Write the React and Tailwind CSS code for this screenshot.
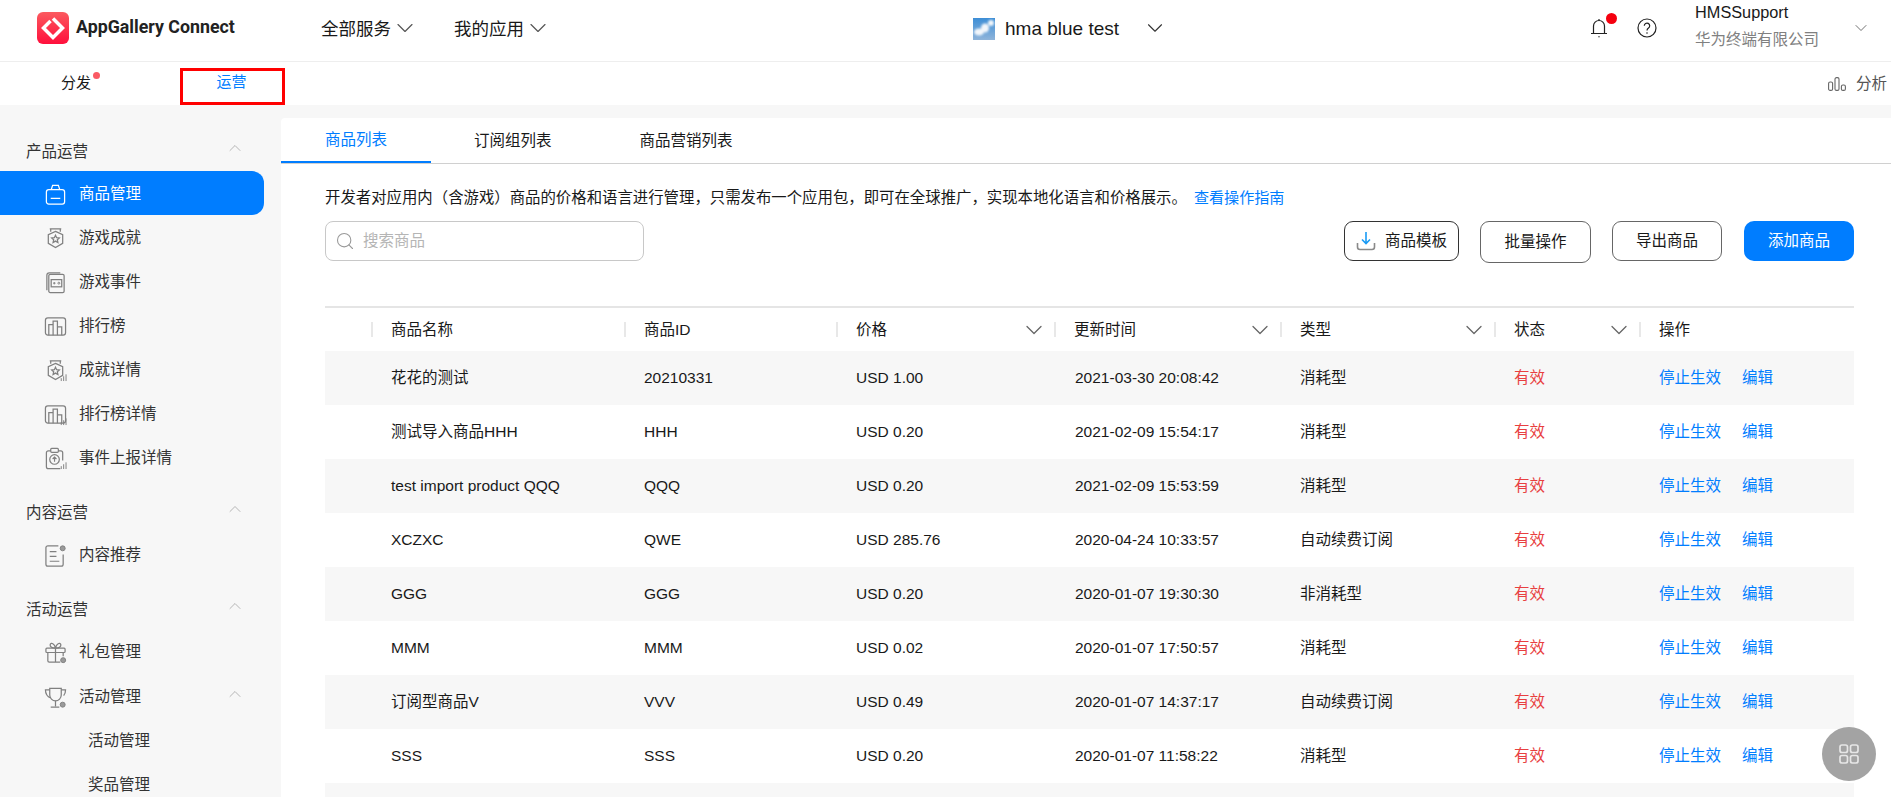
import React from 'react';
import { ChevronDown, ChevronUp, Search } from 'lucide-react';

const ROWS = [
  { name: '花花的测试', id: '20210331', price: 'USD 1.00', time: '2021-03-30 20:08:42', type: '消耗型' },
  { name: '测试导入商品HHH', id: 'HHH', price: 'USD 0.20', time: '2021-02-09 15:54:17', type: '消耗型' },
  { name: 'test import product QQQ', id: 'QQQ', price: 'USD 0.20', time: '2021-02-09 15:53:59', type: '消耗型' },
  { name: 'XCZXC', id: 'QWE', price: 'USD 285.76', time: '2020-04-24 10:33:57', type: '自动续费订阅' },
  { name: 'GGG', id: 'GGG', price: 'USD 0.20', time: '2020-01-07 19:30:30', type: '非消耗型' },
  { name: 'MMM', id: 'MMM', price: 'USD 0.02', time: '2020-01-07 17:50:57', type: '消耗型' },
  { name: '订阅型商品V', id: 'VVV', price: 'USD 0.49', time: '2020-01-07 14:37:17', type: '自动续费订阅' },
  { name: 'SSS', id: 'SSS', price: 'USD 0.20', time: '2020-01-07 11:58:22', type: '消耗型' },
];

const GRID = 'grid grid-cols-[47px_253px_212px_218px_226px_214px_145px_214px]';

function Bars() {
  return <path d="M18 23v-3M20.5 23v-5M23 23v-7" strokeWidth="1" />;
}

function Dot({ cx, cy }) {
  return <circle cx={cx} cy={cy} r="2.6" fill="#9a9a9a" stroke="#808080" strokeWidth="1" />;
}

function Medal({ bars }) {
  return (
    <>
      <path d="M6 2h12M7 2v3M17 2v3" />
      <path d="M12 4.5l7.5 3.5v9L12 21.5 4.5 17V8z" />
      <path d="M12 8.5l1.2 2.6 2.8.3-2.1 1.9.6 2.8-2.5-1.4-2.5 1.4.6-2.8-2.1-1.9 2.8-.3z" />
      {bars && <Bars />}
    </>
  );
}

function Ranks({ bars }) {
  return (
    <>
      <rect x="1.5" y="3" width="21" height="18" rx="2.5" />
      <path d="M5 21v-11h4.5V21M9.5 21V6.5H14V21M14 21v-8.500h4.500V21" />
      {bars && <Bars />}
    </>
  );
}

const ICONS = {
  bag: (
    <>
      <rect x="2.500" y="7" width="19" height="15" rx="2.500" />
      <path d="M7.500 7l1.500-4.500h6L16.500 7M7 16h10" />
    </>
  ),
  medal: <Medal />,
  event: (
    <>
      <path d="M3 20V4.500A2.500 2.500 0 0 1 5.500 2H17" />
      <rect x="5" y="3.500" width="16" height="19" rx="1.500" />
      <rect x="7.500" y="9" width="11" height="7.500" />
      <path d="M9.500 12.700h2.500M10.700 11.500V14" strokeWidth="1" />
      <circle cx="15.500" cy="12.700" r="1" strokeWidth="1" />
    </>
  ),
  rank: <Ranks />,
  medalStats: <Medal bars />,
  rankStats: <Ranks bars />,
  report: (
    <>
      <path d="M7 4H4.500A2 2 0 0 0 2.500 6v14.500a2 2 0 0 0 2 2H17M19.500 14V6a2 2 0 0 0-2-2H15" />
      <rect x="7" y="1.500" width="8" height="4" rx="1" />
      <circle cx="11" cy="13" r="5" />
      <path d="M11 15.500v-5M9 12.500l2-2 2 2" strokeWidth="1.200" />
      <Bars />
    </>
  ),
  content: (
    <>
      <path d="M15 2H4A2 2 0 0 0 2 4v17a2 2 0 0 0 2 2h14a2 2 0 0 0 2-2V11" />
      <path d="M6 8h7M6 13h7M6 18h10" />
      <Dot cx="19.500" cy="4.500" />
    </>
  ),
  gift: (
    <>
      <rect x="2" y="7.500" width="20" height="4.500" rx="1" />
      <path d="M4 12v8.500A1.500 1.500 0 0 0 5.500 22H17M20 12v4M12 7.500V22" />
      <path d="M12 7.500C7.500 7.500 6 5.500 6.500 3.500 7.500 1.500 11 2.500 12 7.500c1-5 4.500-6 5.500-4 .5 2-1 4-5.500 4z" />
      <Dot cx="20" cy="20" />
    </>
  ),
  trophy: (
    <>
      <path d="M6 2.500h12v7a6 6 0 0 1-12 0z" />
      <path d="M6 4H1.500c0 4 1.500 7 5.500 8.500M18 4h4.500c0 2.500-.5 4.500-2 6" />
      <path d="M12 15.500V21M7 22h9" />
      <Dot cx="19.500" cy="19.500" />
    </>
  ),
};

function NavIcon({ name, active }) {
  return (
    <svg
      viewBox="0 0 24 24"
      fill="none"
      stroke={active ? '#ffffff' : '#808080'}
      strokeWidth="1.300"
      className="w-[23px] h-[23px] shrink-0"
    >
      {ICONS[name]}
    </svg>
  );
}

function Section({ title }) {
  return (
    <div className="h-[41px] pt-[3px] pl-[26px] pr-[38px] flex items-center justify-between text-[#333]">
      <span>{title}</span>
      <ChevronUp size={20} strokeWidth={1} className="text-[#a8a8a8] -mt-[9px] -mr-[2px]" />
    </div>
  );
}

function NavItem({ icon, label, active, expand, className = '' }) {
  return (
    <div
      className={`h-[44px] pl-[44px] pt-[2px] flex items-center gap-[12px] ${className} ${
        active ? 'w-[264px] bg-[#007dff] rounded-r-xl text-white' : 'w-[281px] text-[#333]'
      }`}
    >
      <NavIcon name={icon} active={active} />
      <span>{label}</span>
      {expand && <ChevronUp size={20} strokeWidth={1} className="text-[#a8a8a8] ml-auto mr-[36px] -mt-[7px]" />}
    </div>
  );
}

function HeadCell({ label, sort }) {
  return (
    <div className="flex items-center -ml-[1px]">
      <span className="w-[2px] h-[15px] bg-[#e8e8e8]" />
      {label && <span className="ml-[18px] text-[#191919]">{label}</span>}
      {sort && <ChevronDown size={28} strokeWidth={1.100} className="ml-auto mr-[7px] text-[#666]" />}
    </div>
  );
}

function OutlineBtn({ children, className }) {
  return (
    <button className={`h-[40px] rounded-[9px] border bg-white flex items-center justify-center text-[#191919] ${className}`}>
      {children}
    </button>
  );
}

export default function App() {
  return (
    <div className="relative h-[797px] overflow-hidden bg-white text-[15.500px] font-['Liberation_Sans','Noto_Sans_CJK_SC',sans-serif]">
      {/* top bar */}
      <header className="h-[62px] border-b border-[#eeeeee] flex items-center">
        <svg viewBox="0 0 32 32" className="ml-[37px] w-[32px] h-[32px] -mt-[6px] shrink-0">
          <defs>
            <linearGradient id="logo" x1="0" y1="0" x2="0" y2="1">
              <stop offset="0" stopColor="#fb5a5f" />
              <stop offset="1" stopColor="#ff0f3c" />
            </linearGradient>
          </defs>
          <rect width="32" height="32" rx="6" fill="url(#logo)" />
          <path d="M16 6.500L25.500 16 16 25.500 6.500 16 13.500 9" fill="none" stroke="#fff" strokeWidth="3.500" />
        </svg>
        <span className="ml-[7px] w-[245px] -mt-[6px] font-['Roboto',sans-serif] font-bold text-[17.800px] text-[#222] whitespace-nowrap">
          AppGallery Connect
        </span>
        <div className="flex items-center w-[133px] text-[17.500px] text-[#191919] -mt-[3px]">
          全部服务
          <ChevronDown size={28} strokeWidth={1} className="text-[#555] -mt-[3px]" />
        </div>
        <div className="flex items-center w-[519px] text-[17.500px] text-[#191919] -mt-[3px]">
          我的应用
          <ChevronDown size={28} strokeWidth={1} className="text-[#555] -mt-[3px]" />
        </div>
        <svg viewBox="0 0 22 22" className="w-[22px] h-[22px] -mt-[4px] shrink-0">
          <defs>
            <linearGradient id="sky" x1="0" y1="0" x2="0" y2="1">
              <stop offset="0" stopColor="#3d8ed6" />
              <stop offset="1" stopColor="#8fb4da" />
            </linearGradient>
            <filter id="soft">
              <feGaussianBlur stdDeviation="1" />
            </filter>
          </defs>
          <rect width="22" height="22" fill="url(#sky)" />
          <g fill="#f2f6fb" filter="url(#soft)">
            <ellipse cx="6" cy="14" rx="5" ry="3.500" />
            <ellipse cx="12" cy="10" rx="4" ry="4.500" />
            <ellipse cx="18" cy="5" rx="3" ry="3" />
          </g>
        </svg>
        <span className="ml-[10px] text-[19px] text-[#191919] -mt-[3px] whitespace-nowrap">hma blue test</span>
        <ChevronDown size={26} strokeWidth={1} className="ml-[23px] text-[#333] -mt-[6px]" />

        <div className="relative ml-[421px] -mt-[6px]">
          <svg viewBox="0 0 20 20" fill="none" stroke="#222" strokeWidth="1.200" className="w-[20px] h-[20px]">
            <path d="M2 15.500h16M4.500 15.500V8a5.500 5.500 0 0 1 11 0v7.500" />
            <circle cx="10" cy="18.700" r=".7" fill="#222" stroke="none" />
            <path d="M10 1v1.500" />
          </svg>
          <span className="absolute -top-[5px] left-[17px] w-[11px] h-[11px] rounded-full bg-[#f5000f]" />
        </div>
        <svg viewBox="0 0 20 20" fill="none" stroke="#222" strokeWidth="1.200" className="ml-[28px] w-[20px] h-[20px] -mt-[6px]">
          <circle cx="10" cy="10" r="9" />
          <path d="M7.300 7.800a2.700 2.700 0 1 1 4.200 2.200c-1 .7-1.500 1.200-1.500 2.400" />
          <circle cx="10" cy="15" r=".8" fill="#222" stroke="none" />
        </svg>
        <div className="ml-[38px] w-[156px] flex flex-col gap-[10px] -mt-[9px] text-[15.500px]">
          <span className="text-[#191919] leading-[18px] text-[16.300px]">HMSSupport</span>
          <span className="text-[#808080] leading-[18px]">华为终端有限公司</span>
        </div>
        <ChevronDown size={20} strokeWidth={1} className="text-[#555] -mt-[6px]" />
      </header>

      {/* second bar */}
      <nav className="h-[43px] flex items-center">
        <div className="relative ml-[61px] w-[119px] text-[15px] text-[#191919] flex items-center h-full">
          分发
          <span className="absolute left-[32px] top-[10px] w-[7px] h-[7px] rounded-full bg-[#fa5a64]" />
        </div>
        <div className="w-[105px] h-[37px] mt-[6px] border-[3px] border-[#ff0000] flex justify-center text-[15px] text-[#007dff]">
          <span className="-mt-[1px] -ml-[2px] leading-[24px]">运营</span>
        </div>
        <div className="ml-auto mr-[4px] flex items-center gap-[10px] text-[#555]">
          <svg viewBox="0 0 18 14" fill="none" stroke="#666" strokeWidth="1.100" className="w-[18px] h-[14px]">
            <rect x=".6" y="5" width="4" height="8.400" rx="1.500" />
            <rect x="7" y=".6" width="4" height="12.800" rx="1.500" />
            <rect x="13.400" y="8" width="4" height="5.400" rx="1.500" />
          </svg>
          分析
        </div>
      </nav>

      <div className="flex h-[692px] bg-[#f7f7f7]">
        {/* sidebar */}
        <aside className="w-[281px] shrink-0 pt-[25px]">
          <Section title="产品运营" />
          <NavItem icon="bag" label="商品管理" active />
          <NavItem icon="medal" label="游戏成就" />
          <NavItem icon="event" label="游戏事件" />
          <NavItem icon="rank" label="排行榜" />
          <NavItem icon="medalStats" label="成就详情" />
          <NavItem icon="rankStats" label="排行榜详情" />
          <NavItem icon="report" label="事件上报详情" />
          <div className="mt-[12px]">
            <Section title="内容运营" />
          </div>
          <NavItem icon="content" label="内容推荐" />
          <div className="mt-[12px]">
            <Section title="活动运营" />
          </div>
          <NavItem icon="gift" label="礼包管理" />
          <NavItem icon="trophy" label="活动管理" expand className="mt-[1px]" />
          <div className="h-[44px] pl-[88px] pt-[2px] flex items-center text-[#333]">活动管理</div>
          <div className="h-[44px] pl-[88px] pt-[2px] flex items-center text-[#333]">奖品管理</div>
        </aside>

        {/* main panel */}
        <main className="flex-1 mt-[13px] bg-white rounded-tl-[4px]">
          <div className="h-[46px] flex border-b border-[#d0d0d0]">
            <div className="px-[44px] pt-[2px] h-[46px] border-b-2 border-[#007dff] text-[#007dff] flex items-center -mt-[1px]">商品列表</div>
            <div className="px-[43px] pt-[2px] h-[46px] flex items-center text-[#191919] -mt-[1px]">订阅组列表</div>
            <div className="px-[45px] pt-[2px] h-[46px] flex items-center text-[#191919] -mt-[1px]">商品营销列表</div>
          </div>

          <div className="pl-[44px] pr-[37px]">
            <p className="mt-[22px] h-[24px] leading-[24px] text-[15.400px] text-[#191919] whitespace-nowrap">
              开发者对应用内（含游戏）商品的价格和语言进行管理，只需发布一个应用包，即可在全球推广，实现本地化语言和价格展示。
              <span className="ml-[7px] text-[15.100px] text-[#007dff]">查看操作指南</span>
            </p>

            <div className="mt-[11px] flex items-start">
              <div className="w-[319px] h-[40px] rounded-[8px] border border-[#c8c8c8] flex items-center pl-[9px] gap-[8px] text-[#b5b5b5]">
                <Search size={20} strokeWidth={1.300} className="text-[#999]" />
                搜索商品
              </div>
              <OutlineBtn className="ml-auto w-[115px] border-[#333] gap-[9px]">
                <svg viewBox="0 0 20 20" fill="none" strokeWidth="1.600" className="w-[20px] h-[20px]">
                  <path d="M10 1v11M6 8.500l4 4 4-4" stroke="#1a9bf5" />
                  <path d="M1.500 12v4a2.500 2.500 0 0 0 2.500 2.500h12a2.500 2.500 0 0 0 2.500-2.500v-4" stroke="#8a8a8a" />
                </svg>
                商品模板
              </OutlineBtn>
              <OutlineBtn className="ml-[21px] w-[111px] h-[42px] border-[#666]">批量操作</OutlineBtn>
              <OutlineBtn className="ml-[21px] w-[110px] border-[#666]">导出商品</OutlineBtn>
              <button className="ml-[22px] w-[110px] h-[40px] rounded-[10px] bg-[#007dff] text-white">添加商品</button>
            </div>

            {/* table */}
            <div className="mt-[43px] border-t-2 border-[#e5e5e5]">
              <div className={`${GRID} h-[43px]`}>
                <div />
                <HeadCell label="商品名称" />
                <HeadCell label="商品ID" />
                <HeadCell label="价格" sort />
                <HeadCell label="更新时间" sort />
                <HeadCell label="类型" sort />
                <HeadCell label="状态" sort />
                <HeadCell label="操作" />
              </div>
              {ROWS.map((r, i) => (
                <div key={r.id} className={`${GRID} h-[54px] items-center text-[#191919] ${i % 2 === 0 ? 'bg-[#f7f7f7]' : 'bg-white'}`}>
                  <div />
                  <div className="pl-[19px]">{r.name}</div>
                  <div className="pl-[19px]">{r.id}</div>
                  <div className="pl-[19px]">{r.price}</div>
                  <div className="pl-[20px]">{r.time}</div>
                  <div className="pl-[19px]">{r.type}</div>
                  <div className="pl-[19px] text-[#e84040]">有效</div>
                  <div className="pl-[19px] text-[#007dff] flex gap-[21px]">
                    <span>停止生效</span>
                    <span>编辑</span>
                  </div>
                </div>
              ))}
              <div className="h-[54px] bg-[#f7f7f7]" />
            </div>
          </div>
        </main>
      </div>

      {/* floating shortcut */}
      <div className="absolute left-[1822px] top-[727px] w-[54px] h-[54px] rounded-full bg-[#a3a3a3] flex items-center justify-center">
        <svg viewBox="0 0 20 20" fill="none" stroke="#e6e6e6" strokeWidth="1.700" className="w-[20px] h-[20px]">
          <rect x="1" y="1" width="7.500" height="7.500" rx="2" />
          <rect x="11.500" y="1" width="7.500" height="7.500" rx="2" />
          <rect x="1" y="11.500" width="7.500" height="7.500" rx="2" />
          <rect x="11.500" y="11.500" width="7.500" height="7.500" rx="2" />
        </svg>
      </div>
    </div>
  );
}
